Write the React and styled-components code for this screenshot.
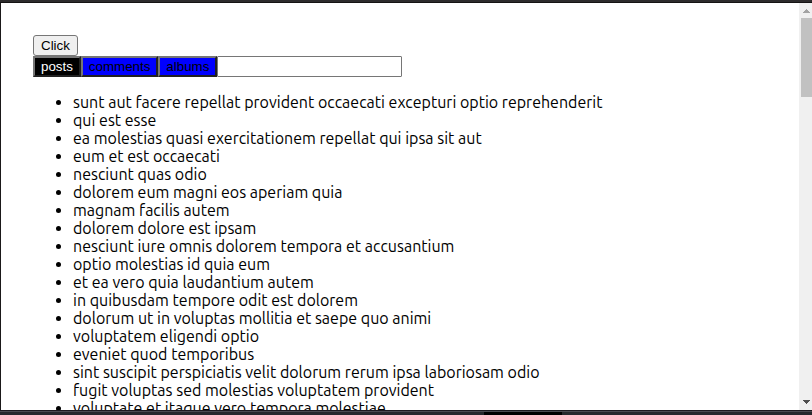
import React, { useState } from "react";
import styled, { createGlobalStyle } from "styled-components";

const GlobalStyle = createGlobalStyle`
  * { box-sizing: border-box; }
  body { margin: 0; background: #fff; }
`;

const Window = styled.div`
  display: flex;
  flex-direction: column;
  height: 100vh;
  overflow: hidden;
  color: #000;
  font-family: Ubuntu, "Noto Sans", sans-serif;
  font-size: 16px;
  line-height: 18px;
`;

const TopEdge = styled.div`
  flex: none;
  height: 3px;
  background: #2d2b2c;
  border-bottom: 1px solid #151314;
`;

const BottomEdge = styled.div`
  flex: none;
  display: grid;
  grid-template-columns: 484fr 78fr 250fr;
  height: 5px;
  background: #26282c;
  border-top: 1px solid #1c1a1f;
  box-shadow: inset 0 1px #4a4a50;
  padding-top: 1px;
`;

const Dock = styled.div`
  grid-column: 2;
  background: #000;
`;

const Viewport = styled.div`
  flex: 1;
  min-height: 0;
  display: flex;
  border-left: 1px solid #1a1819;
`;

const Page = styled.main`
  flex: 1;
  min-width: 0;
  overflow: hidden;
  padding: 32px;
`;

const Row = styled.div`
  display: flex;
`;

const ClickButton = styled.button`
  height: 21px;
  padding: 1px 7px;
  font-family: "Liberation Sans", Arial, sans-serif;
  color: #000;
  background: #efefef;
  border: 1px solid #767676;
  border-radius: 3px;
`;

const TabButton = styled.button`
  height: 21px;
  padding: 1px 6px;
  font-family: "Liberation Sans", Arial, sans-serif;
  color: ${(p) => (p.$active ? "#fff" : "#000")};
  background: ${(p) => (p.$active ? "#000" : "#00f")};
  border: 2px solid;
  border-color: #767676 #212121 #212121 #767676;
  border-radius: 0;
`;

const TextBox = styled.input`
  width: 185px;
  height: 21px;
  padding: 1px 2px;
  font-family: "Liberation Sans", Arial, sans-serif;
  background: #fff;
  border: 1px solid #767676;
  border-radius: 1px;
`;

const List = styled.ul`
  margin: 16px 0;
  padding-left: 40px;
`;

const ScrollTrack = styled.div`
  flex: none;
  width: 13px;
  display: flex;
  flex-direction: column;
  background: #f0f0f0;
`;

const ScrollArrow = styled.svg`
  flex: none;
  display: block;
  width: 13px;
  height: 15px;
`;

const ScrollRoom = styled.div`
  flex: 1;
  padding-left: 2px;
`;

const ScrollThumb = styled.div`
  height: 21%;
  background: #c1c1c1;
`;

const tabs = ["posts", "comments", "albums"];

const titles = [
  "sunt aut facere repellat provident occaecati excepturi optio reprehenderit",
  "qui est esse",
  "ea molestias quasi exercitationem repellat qui ipsa sit aut",
  "eum et est occaecati",
  "nesciunt quas odio",
  "dolorem eum magni eos aperiam quia",
  "magnam facilis autem",
  "dolorem dolore est ipsam",
  "nesciunt iure omnis dolorem tempora et accusantium",
  "optio molestias id quia eum",
  "et ea vero quia laudantium autem",
  "in quibusdam tempore odit est dolorem",
  "dolorum ut in voluptas mollitia et saepe quo animi",
  "voluptatem eligendi optio",
  "eveniet quod temporibus",
  "sint suscipit perspiciatis velit dolorum rerum ipsa laboriosam odio",
  "fugit voluptas sed molestias voluptatem provident",
  "voluptate et itaque vero tempora molestiae",
];

export default function App() {
  const [type, setType] = useState("posts");
  const [title, setTitle] = useState("");
  const [shown, setShown] = useState(true);

  return (
    <>
      <GlobalStyle />
      <Window>
        <TopEdge />
        <Viewport>
          <Page>
            <Row>
              <ClickButton type="button" onClick={() => setShown(!shown)}>
                Click
              </ClickButton>
            </Row>
            {shown && (
              <>
                <Row>
                  {tabs.map((tab) => (
                    <TabButton
                      key={tab}
                      type="button"
                      $active={tab === type}
                      aria-pressed={tab === type}
                      onClick={() => setType(tab)}
                    >
                      {tab}
                    </TabButton>
                  ))}
                  <TextBox
                    type="text"
                    aria-label="Title"
                    value={title}
                    onChange={(e) => setTitle(e.target.value)}
                  />
                </Row>
                <List>
                  {titles.map((text) => (
                    <li key={text}>{text}</li>
                  ))}
                </List>
              </>
            )}
          </Page>
          <ScrollTrack aria-hidden="true">
            <ScrollArrow viewBox="0 0 13 15" shapeRendering="crispEdges">
              <path d="M7 6h1v1h1v1h1v1h1v1H4V9h1V8h1V7h1z" fill="#a3a3a3" />
            </ScrollArrow>
            <ScrollRoom>
              <ScrollThumb />
            </ScrollRoom>
            <ScrollArrow viewBox="0 0 13 15" shapeRendering="crispEdges">
              <path d="M4 5h7v1h-1v1H9v1H8v1H7V8H6V7H5V6H4z" fill="#505050" />
            </ScrollArrow>
          </ScrollTrack>
        </Viewport>
        <BottomEdge>
          <Dock />
        </BottomEdge>
      </Window>
    </>
  );
}
